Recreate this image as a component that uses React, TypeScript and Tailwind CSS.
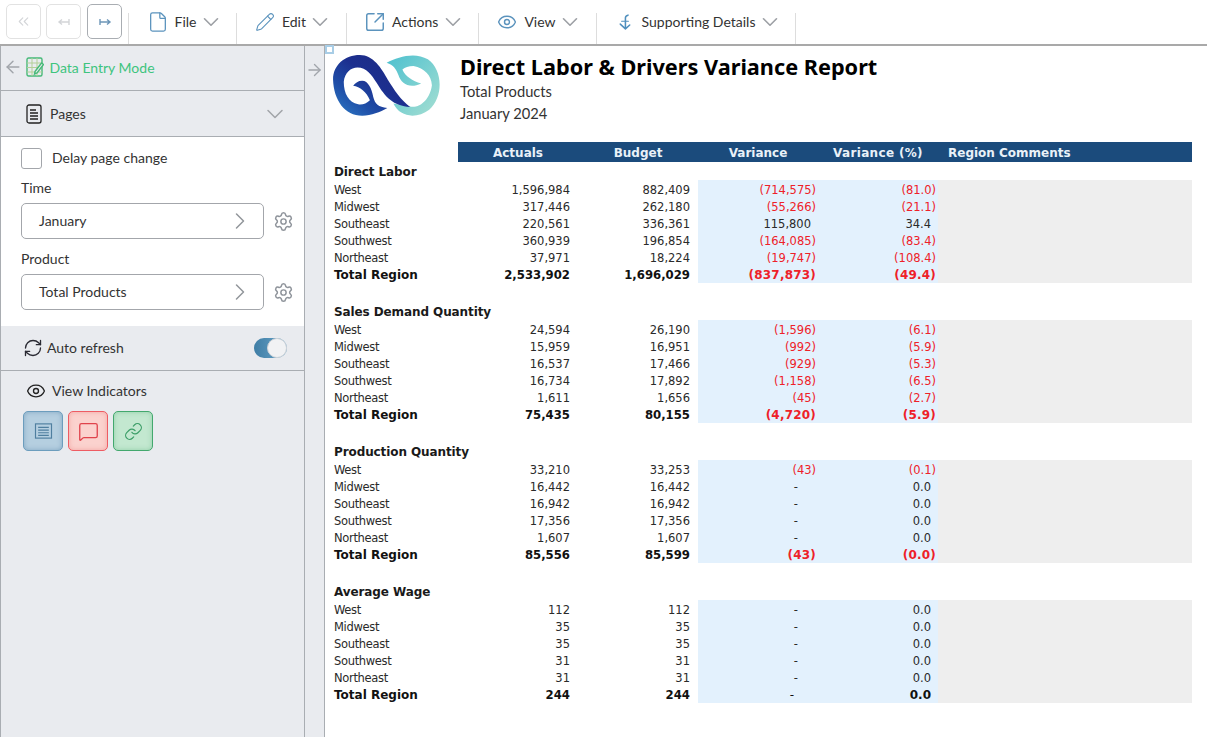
import React from "react";
import { ChevronsLeft, ChevronDown, ChevronRight, File, Pencil, SquareArrowOutUpRight, Eye, ArrowLeft, ArrowRight, Settings, RefreshCw, Link, MessageSquare } from "lucide-react";

type Row = [string, string, string, string, string];
const sections: { title: string; rows: Row[] }[] = [
  { title: "Direct Labor", rows: [
    ["West", "1,596,984", "882,409", "(714,575)", "(81.0)"],
    ["Midwest", "317,446", "262,180", "(55,266)", "(21.1)"],
    ["Southeast", "220,561", "336,361", "115,800", "34.4"],
    ["Southwest", "360,939", "196,854", "(164,085)", "(83.4)"],
    ["Northeast", "37,971", "18,224", "(19,747)", "(108.4)"],
    ["Total Region", "2,533,902", "1,696,029", "(837,873)", "(49.4)"],
  ]},
  { title: "Sales Demand Quantity", rows: [
    ["West", "24,594", "26,190", "(1,596)", "(6.1)"],
    ["Midwest", "15,959", "16,951", "(992)", "(5.9)"],
    ["Southeast", "16,537", "17,466", "(929)", "(5.3)"],
    ["Southwest", "16,734", "17,892", "(1,158)", "(6.5)"],
    ["Northeast", "1,611", "1,656", "(45)", "(2.7)"],
    ["Total Region", "75,435", "80,155", "(4,720)", "(5.9)"],
  ]},
  { title: "Production Quantity", rows: [
    ["West", "33,210", "33,253", "(43)", "(0.1)"],
    ["Midwest", "16,442", "16,442", "-", "0.0"],
    ["Southeast", "16,942", "16,942", "-", "0.0"],
    ["Southwest", "17,356", "17,356", "-", "0.0"],
    ["Northeast", "1,607", "1,607", "-", "0.0"],
    ["Total Region", "85,556", "85,599", "(43)", "(0.0)"],
  ]},
  { title: "Average Wage", rows: [
    ["West", "112", "112", "-", "0.0"],
    ["Midwest", "35", "35", "-", "0.0"],
    ["Southeast", "35", "35", "-", "0.0"],
    ["Southwest", "31", "31", "-", "0.0"],
    ["Northeast", "31", "31", "-", "0.0"],
    ["Total Region", "244", "244", "-", "0.0"],
  ]},
];

function Cell({ v, total }: { v: string; total: boolean }) {
  const neg = v.startsWith("(");
  const dash = v === "-";
  const pad = neg
    ? total
      ? "pr-[2px] tracking-[0.2px] text-[#ee2129]"
      : "pr-[2px] text-[#ee2129]"
    : dash
      ? total
        ? "pr-[24px] font-normal"
        : "pr-[20px]"
      : "pr-[7px]";
  return <div className={`w-[120px] bg-[#e3f1fd] text-right ${pad}`}>{v}</div>;
}

function Section({ title, rows }: { title: string; rows: Row[] }) {
  return (
    <div className="mb-[19px]">
      <div className="h-[18px] pl-[9px] text-[12px] font-bold leading-[20px] tracking-[-0.1px] text-[#1a1a1a]">{title}</div>
      {rows.map((r, i) => {
        const total = i === rows.length - 1;
        return (
          <div key={r[0]} className={`flex leading-[20px] ${total ? "h-[18px] text-[12px] font-bold text-[#111]" : "h-[17px] text-[#2a2a2a]"}`}>
            <div className={`w-[133px] pl-[9px] ${total ? "" : "tracking-[-0.33px]"}`}>{r[0]}</div>
            <div className={`w-[120px] pr-[8px] text-right ${total ? "text-[11.7px]" : ""}`}>{r[1]}</div>
            <div className={`w-[120px] pr-[8px] text-right ${total ? "text-[11.7px]" : ""}`}>{r[2]}</div>
            <Cell v={r[3]} total={total} />
            <Cell v={r[4]} total={total} />
            <div className="w-[254px] bg-[#eeeeee]" />
          </div>
        );
      })}
    </div>
  );
}

function Sep() {
  return <div className="mt-[13px] h-[31px] w-px bg-[#dddddd]" />;
}

function Menu({ icon, label, className }: { icon: React.ReactNode; label: string; className: string }) {
  return (
    <>
      <div className={`flex h-[44px] items-center ${className}`}>
        {icon}
        <span className="mb-[2px] text-[14px] text-[#333]">{label}</span>
        <ChevronDown className="ml-[1.5px] h-[26px] w-[26px] text-[#9da0a5]" strokeWidth={1.5} />
      </div>
      <Sep />
    </>
  );
}

function Select({ value }: { value: string }) {
  return (
    <div className="flex items-center">
      <div className="flex h-[36px] w-[243px] items-center justify-between rounded-[5px] border border-[#a3a6ab] pl-[17px] pr-[9px] text-[14px] text-[#333]">
        <span className="mb-[2px]">{value}</span>
        <ChevronRight className="h-[28px] w-[28px] text-[#93979c]" strokeWidth={1.3} />
      </div>
      <Settings className="ml-[9px] h-[21px] w-[21px] text-[#8f949b]" strokeWidth={1.7} />
    </div>
  );
}

function Logo() {
  return (
    <svg viewBox="25 45 322 185" className="h-[62px] w-[108px]">
      <defs>
        <linearGradient id="lgD" x1="0" y1="1" x2="1" y2="0">
          <stop offset="0" stopColor="#2f7fc9" />
          <stop offset="0.28" stopColor="#1f4fa8" />
          <stop offset="0.55" stopColor="#1c2f8f" />
          <stop offset="1" stopColor="#1f2a80" />
        </linearGradient>
        <linearGradient id="lgT" x1="0" y1="0" x2="1" y2="1">
          <stop offset="0" stopColor="#4cc0cf" />
          <stop offset="1" stopColor="#a6dfd2" />
        </linearGradient>
      </defs>
      <path fill="url(#lgT)" d="M185 68 C220 50 270 35 308 58 C352 88 356 170 312 208 C275 236 225 232 205 190 L255 199 C285 205 315 175 320 135 C318 105 298 85 265 78 C250 78 240 82 232 88 C240 108 262 122 288 130 C255 146 228 132 220 105 C214 88 205 74 185 68 Z" />
      <path fill="url(#lgD)" d="M255 200 C228 180 208 150 188 118 C170 85 145 45 105 45 C60 45 25 75 25 118 C27 180 60 226 112 226 C140 226 165 215 187 203 C160 200 150 190 145 170 C140 145 130 122 112 122 C100 122 92 128 85 137 C105 140 125 155 135 180 C125 190 112 194 100 192 C72 188 57 160 57 125 C60 97 78 82 98 82 C125 82 140 104 155 128 C180 170 205 198 255 200 Z" />
    </svg>
  );
}

export default function App() {
  return (
    <div className="flex h-[737px] w-[1207px] flex-col overflow-hidden bg-white font-['Lato',sans-serif]">
      <header className="flex h-[46px] shrink-0 border-b-2 border-[#a9a9a9] bg-white">
        <div className="flex items-start pl-[6px] pr-[6px] pt-[4px]">
          <div className="flex h-[35px] w-[35px] items-center justify-center rounded-[5px] border border-[#e2e2e2]">
            <ChevronsLeft className="h-[17px] w-[17px] text-[#d3d5d8]" strokeWidth={1.6} />
          </div>
          <div className="ml-[5px] flex h-[35px] w-[35px] items-center justify-center rounded-[5px] border border-[#e2e2e2]">
            <svg viewBox="0 0 14 14" className="h-[14px] w-[14px]" fill="none" stroke="#d3d5d8" strokeWidth="1.4"><path d="M2 7h10M5 4.5 2 7l3 2.5M12 4v6" /></svg>
          </div>
          <div className="ml-[6px] flex h-[35px] w-[35px] items-center justify-center rounded-[5px] border border-[#a9adb2]">
            <svg viewBox="0 0 14 14" className="h-[14px] w-[14px]" fill="none" stroke="#6d96b8" strokeWidth="1.4"><path d="M2 7h10M9 4.5 12 7 9 9.5M2 4v6" /></svg>
          </div>
        </div>
        <Sep />
        <Menu className="pl-[18px] pr-[12px]" label="File" icon={<File className="mr-[5.5px] h-[22px] w-[22px] text-[#5b93bd]" strokeWidth={1.4} />} />
        <Menu className="pl-[18px] pr-[12.5px]" label="Edit" icon={<Pencil className="mr-[7px] h-[20px] w-[20px] text-[#5b93bd]" strokeWidth={1.3} />} />
        <Menu className="pl-[17px] pr-[12.5px]" label="Actions" icon={<SquareArrowOutUpRight className="mr-[6px] h-[22px] w-[22px] text-[#5b93bd]" strokeWidth={1.6} />} />
        <Menu className="pl-[18px] pr-[12.5px]" label="View" icon={<Eye className="mr-[7px] h-[20px] w-[20px] text-[#5b93bd]" strokeWidth={1.7} />} />
        <Menu
          className="pl-[22px] pr-[12px]"
          label="Supporting Details"
          icon={
            <svg viewBox="0 0 14 20" className="mr-[11px] h-[20px] w-[12px]" fill="none" stroke="#4f8fbd" strokeWidth="1.8" strokeLinecap="round" strokeLinejoin="round">
              <path d="M7.5 18V5c0-1.5 1-2.5 3-3M1.5 12.5 7.5 18l5-4.5" />
              <path d="M3 9h8" strokeWidth="1.2" />
            </svg>
          }
        />
      </header>

      <div className="flex min-h-0 flex-1">
        <aside className="flex w-[305px] shrink-0 flex-col border-x border-[#a9adb2] bg-[#e9ebef]">
          <div className="flex h-[45px] shrink-0 items-center border-b border-[#a9adb2] pb-[2px] pl-[1.5px] text-[#3ec47e]">
            <ArrowLeft className="h-[20px] w-[20px] text-[#a1a5ab]" strokeWidth={1.7} />
            <svg viewBox="0 0 18 20" className="ml-[3px] mr-[6px] h-[20px] w-[18px]" fill="none" stroke="#46b978" strokeWidth="1.4">
              <rect x="1" y="1" width="15" height="18" rx="1.5" />
              <path d="M1 6h15M1 10.5h15M1 15h15M6 1v18M11 1v18" stroke="#b3cf97" strokeWidth="1" />
              <path d="M9 14.5 15.5 6l2 1.5L11 16l-2.5 1z" fill="#e9ebef" />
            </svg>
            <span className="text-[14px]">Data Entry Mode</span>
          </div>
          <div className="flex h-[46px] shrink-0 items-center justify-between border-b border-[#a9adb2] pl-[25px] pr-[15px]">
            <div className="flex items-center">
              <svg viewBox="0 0 16 20" className="mr-[8px] h-[20px] w-[16px]" fill="none" stroke="#222" strokeWidth="1.3">
                <rect x="1" y="1" width="14" height="18" rx="2" />
                <path d="M4 6h6M4 9h8M4 12h8M4 15h8" />
              </svg>
              <span className="text-[14px] text-[#333]">Pages</span>
            </div>
            <ChevronDown className="h-[28px] w-[28px] text-[#a2a5a9]" strokeWidth={1.3} />
          </div>
          <div className="flex h-[189px] shrink-0 flex-col bg-white pl-[20px]">
            <label className="mt-[11px] flex h-[21px] items-center">
              <span className="h-[21px] w-[21px] rounded-[3px] border border-[#a3a6ab] bg-white" />
              <span className="mb-[2px] ml-[10px] text-[14px] text-[#333]">Delay page change</span>
            </label>
            <div className="mt-[10px] h-[18px] text-[14px] leading-[18px] text-[#333]">Time</div>
            <div className="mt-[6px]"><Select value="January" /></div>
            <div className="mt-[11px] h-[18px] text-[14px] leading-[18px] text-[#333]">Product</div>
            <div className="mt-[6px]"><Select value="Total Products" /></div>
          </div>
          <div className="flex h-[45px] shrink-0 items-center justify-between border-b border-[#a9adb2] pl-[22px] pr-[17px]">
            <div className="flex items-center">
              <RefreshCw className="mr-[4px] h-[20px] w-[20px] text-[#2a2a33]" strokeWidth={1.6} />
              <span className="mb-[2px] text-[14px] text-[#333]">Auto refresh</span>
            </div>
            <div className="flex h-[20px] w-[33px] items-center justify-end rounded-full bg-gradient-to-r from-[#3f7ea6] to-[#6aa5c9]">
              <span className="h-[20px] w-[20px] rounded-full border border-[#cfd3d8] bg-[#f1f2f4]" />
            </div>
          </div>
          <div className="pl-[22px] pt-[11px]">
            <div className="flex h-[18px] items-center pl-[3px]">
              <Eye className="mr-[6px] h-[20px] w-[20px] text-[#222]" strokeWidth={1.6} />
              <span className="mb-[2px] text-[14px] text-[#333]">View Indicators</span>
            </div>
            <div className="mt-[11px] flex gap-[5px]">
              <div className="flex h-[40px] w-[40px] items-center justify-center rounded-[5px] border border-[#6c9dbd] bg-[#b5cfe0] shadow-[inset_0_0_5px_rgba(70,120,160,0.45)]">
                <svg viewBox="0 0 20 18" className="h-[16px] w-[19px]" fill="none" stroke="#4f7f9f" strokeWidth="1.3"><rect x="1" y="1" width="18" height="16" /><path d="M4 5h12M4 8h12M4 11h12M4 14h12" /></svg>
              </div>
              <div className="flex h-[40px] w-[40px] items-center justify-center rounded-[5px] border border-[#ee5c63] bg-[#fbd2ce] shadow-[inset_0_0_5px_rgba(230,90,90,0.35)]">
                <MessageSquare className="h-[21px] w-[21px] text-[#e0434c]" strokeWidth={1.5} />
              </div>
              <div className="flex h-[40px] w-[40px] items-center justify-center rounded-[5px] border border-[#43a86e] bg-[#c3e8d0] shadow-[inset_0_0_5px_rgba(60,160,100,0.35)]">
                <Link className="h-[19px] w-[19px] text-[#3c9e68]" strokeWidth={1.5} />
              </div>
            </div>
          </div>
        </aside>

        <div className="flex w-[20px] shrink-0 justify-center border-r border-[#a9adb2] bg-[#e9ebef] pt-[14px]">
          <ArrowRight className="h-[20px] w-[20px] text-[#a1a5ab]" strokeWidth={1.7} />
        </div>

        <main className="relative flex-1 bg-white font-['DejaVu_Sans',sans-serif] text-[11.5px]">
          <div className="absolute left-0 top-[-1px] h-[9px] w-[9px] border-2 border-[#a8cde6] bg-white" />
          <div className="flex h-[96px] pl-[8px] pt-[9px]">
            <Logo />
            <div className="ml-[19px]">
              <div className="mt-[-1px] font-['Noto_Sans',sans-serif] text-[21.7px] font-bold leading-[25px] text-black">Direct Labor &amp; Drivers Variance Report</div>
              <div className="mt-[2px] font-['Lato',sans-serif] text-[14.7px] leading-[21px] text-[#333]">Total Products</div>
              <div className="font-['Lato',sans-serif] text-[14.7px] leading-[22px] text-[#333]">January 2024</div>
            </div>
          </div>
          <div className="ml-[133px] flex h-[20px] w-[734px] items-center bg-[#1b4b7c] pt-[1px] text-[12px] font-bold text-[#e9f1f8]">
            <div className="w-[120px] text-center">Actuals</div>
            <div className="w-[120px] text-center">Budget</div>
            <div className="w-[120px] text-center">Variance</div>
            <div className="w-[120px] text-center tracking-[0.33px]">Variance (%)</div>
            <div className="pl-[10px]">Region Comments</div>
          </div>
          {sections.map((s) => (
            <Section key={s.title} title={s.title} rows={s.rows} />
          ))}
        </main>
      </div>
    </div>
  );
}
